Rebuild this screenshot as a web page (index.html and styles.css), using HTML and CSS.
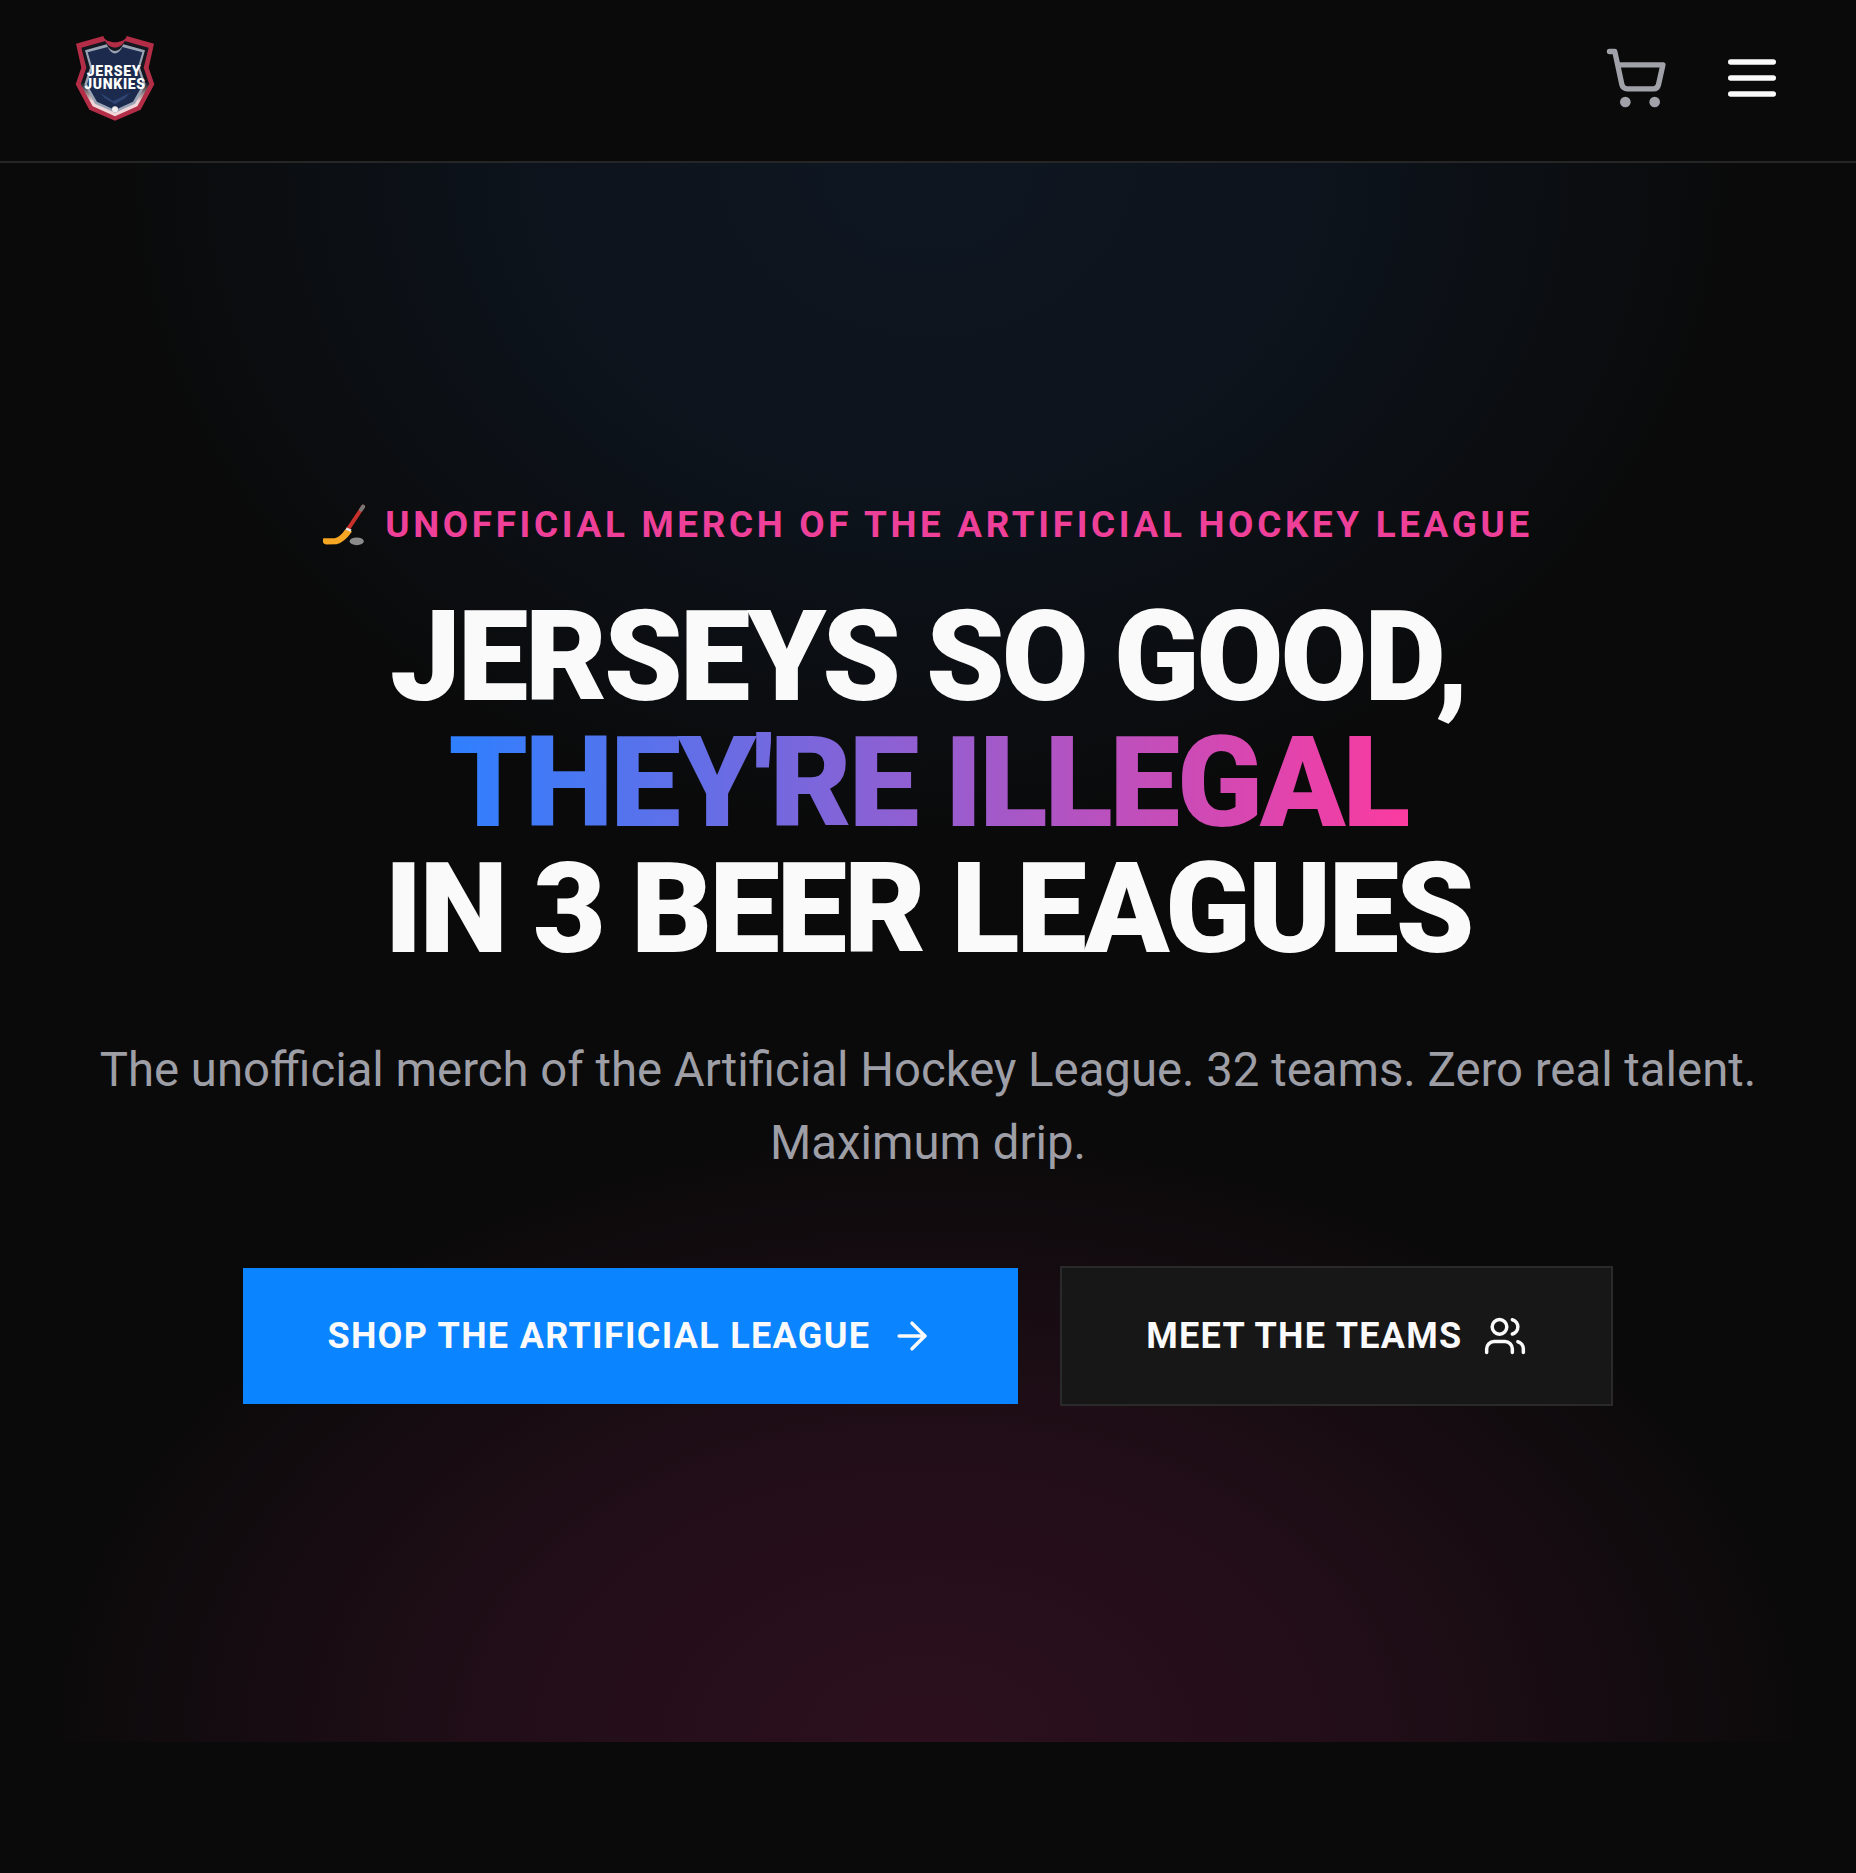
FILE: index.html
```html
<!DOCTYPE html>
<html lang="en">
<head>
  <meta charset="UTF-8" />
  <meta name="viewport" content="width=device-width, initial-scale=1" />
  <title>Jersey Junkies</title>
  <link rel="stylesheet" href="styles.css">
</head>
<body>
  <header class="topbar">
    <svg class="logo" viewBox="66 42 258 258" aria-label="Jersey Junkies">
      <defs>
        <linearGradient id="rim" x1="0" y1="0" x2="0" y2="1">
          <stop offset="0.55" stop-color="#14171f"/>
          <stop offset="0.8" stop-color="#f0d6d8"/>
        </linearGradient>
      </defs>
      <path d="M160 45 C165 70 225 70 230 45 L312 68 L296 140 L313 190 L272 266 L195 299 L118 266 L77 190 L94 140 L78 68 Z" fill="#b32d47"/>
      <path d="M166 60 C177 86 213 86 224 60 L296 80 L281 140 L298 190 L262 256 L195 286 L128 256 L92 190 L109 140 L94 80 Z" fill="url(#rim)"/>
      <path d="M170 70 C182 97 208 97 220 70 L285 88 L270 140 L287 190 L255 248 L195 275 L135 248 L103 190 L120 140 L105 88 Z" fill="#9aa3b4"/>
      <path d="M173 78 C185 104 205 104 217 78 L277 94 L263 140 L279 190 L249 242 L195 267 L141 242 L111 190 L127 140 L113 94 Z" fill="#1c2b4d"/>
      <path d="M150 215 L190 240 L240 215 L225 232 L195 250 L165 232 Z" fill="#2f4472"/>
      <circle cx="195" cy="265" r="9" fill="#f2eef0"/>
      <text class="logo-text" x="191" y="165" textLength="162" lengthAdjust="spacing">JERSEY</text>
      <text class="logo-text" x="194" y="203" textLength="182" lengthAdjust="spacing">JUNKIES</text>
    </svg>
    <div class="topbar-actions">
      <svg class="icon-lg icon-cart" viewBox="0 0 24 24"><circle cx="8" cy="21" r="1"/><circle cx="19" cy="21" r="1"/><path d="M2.05 2.05h2l2.66 12.42a2 2 0 0 0 2 1.58h9.78a2 2 0 0 0 1.95-1.57l1.65-7.43H5.12"/></svg>
      <svg class="icon-lg icon-menu" viewBox="0 0 24 24"><path d="M4 12h16"/><path d="M4 6h16"/><path d="M4 18h16"/></svg>
    </div>
  </header>

  <section class="hero">
    <p class="eyebrow">
      <svg class="stick" viewBox="47 42 124 124">
        <path d="M118 115 L160 52" stroke="#c9302c" stroke-width="11" stroke-linecap="round"/>
        <path d="M160 52 L154 61" stroke="#777" stroke-width="11" stroke-linecap="round"/>
        <path d="M110 116 L129 122 Q106 154 85 158 L56 159 Q42 157 48 141 L80 141 Q96 138 110 116 Z" fill="#f5a623"/>
        <path d="M112 114 L126 120" stroke="#e6e6e6" stroke-width="7"/>
        <ellipse cx="142" cy="150" rx="20" ry="11" fill="#8b8b8b"/>
      </svg>
      <span>Unofficial merch of the Artificial Hockey League</span>
    </p>
    <h1 class="headline">
      <span class="headline-line">Jerseys so good,</span>
      <span class="headline-line headline-grad">They're illegal</span>
      <span class="headline-line">in 3 beer leagues</span>
    </h1>
    <p class="lead">The unofficial merch of the Artificial Hockey League. 32 teams. Zero real talent. Maximum drip.</p>
    <div class="cta-row">
      <a class="btn btn-primary">Shop the Artificial League
        <svg class="icon-btn" viewBox="0 0 24 24"><path d="M5 12h14"/><path d="m12 5 7 7-7 7"/></svg>
      </a>
      <a class="btn btn-dark">Meet the Teams
        <svg class="icon-btn" viewBox="0 0 24 24"><path d="M16 21v-2a4 4 0 0 0-4-4H6a4 4 0 0 0-4 4v2"/><circle cx="9" cy="7" r="4"/><path d="M22 21v-2a4 4 0 0 0-3-3.87"/><path d="M16 3.13a4 4 0 0 1 0 7.75"/></svg>
      </a>
    </div>
  </section>

  <div class="page-end"></div>
</body>
</html>
```

FILE: styles.css
```css
* { box-sizing: border-box; }

body {
  margin: 0;
  background: #0a0a0a;
  color: #fafafa;
  font-family: Roboto, "Liberation Sans", sans-serif;
}

.topbar {
  display: flex;
  align-items: center;
  justify-content: space-between;
  height: 163px;
  padding: 0 72px 6px 72px;
  border-bottom: 2px solid #262626;
}

.logo {
  width: 86px;
  height: 86px;
}

.logo-text {
  fill: #fff;
  font-family: Roboto, sans-serif;
  font-weight: 900;
  font-size: 42px;
  text-anchor: middle;
}

.topbar-actions {
  display: flex;
  align-items: center;
  gap: 52px;
}

.icon-lg {
  width: 64px;
  height: 64px;
  fill: none;
  stroke-width: 2;
  stroke-linecap: round;
  stroke-linejoin: round;
}

.icon-cart { stroke: #a1a1aa; }
.icon-menu { stroke: #fafafa; }

.hero {
  display: flex;
  flex-direction: column;
  align-items: center;
  justify-content: center;
  height: 1579px;
  padding-top: 3px;
  text-align: center;
  background:
    radial-gradient(ellipse 820px 680px at 50% 0, rgba(30, 75, 135, 0.19), rgba(30, 75, 135, 0.14) 50%, transparent 100%),
    radial-gradient(ellipse 900px 620px at 50% 100%, rgba(200, 40, 120, 0.18), rgba(200, 40, 120, 0.12) 50%, transparent 100%);
}

.eyebrow {
  display: flex;
  align-items: center;
  gap: 18px;
  margin: 0 0 47px;
  color: #ee4099;
  font-size: 36.8px;
  font-weight: 700;
  letter-spacing: 0.1em;
  text-transform: uppercase;
}

.stick {
  width: 44px;
  height: 44px;
}

.headline {
  margin: 0 0 62px;
  font-size: 126px;
  font-weight: 900;
  line-height: 126px;
  letter-spacing: -0.025em;
  text-transform: uppercase;
}

.headline-line { display: block; }

.headline-grad {
  width: fit-content;
  margin: 0 auto;
  background: linear-gradient(90deg, #2e80ff, #fb3ba0);
  background-clip: text;
  -webkit-background-clip: text;
  color: transparent;
}

.lead {
  max-width: 1700px;
  margin: 0 0 86px;
  color: #9e9ea6;
  font-size: 47.3px;
  line-height: 73px;
}

.cta-row {
  display: flex;
  align-items: center;
  gap: 42px;
}

.btn {
  display: flex;
  align-items: center;
  gap: 20px;
  font-size: 36px;
  font-weight: 700;
  letter-spacing: 1.3px;
  text-transform: uppercase;
  white-space: nowrap;
}

.btn-primary {
  height: 136px;
  padding: 0 84px;
  background: #0a84ff;
  color: #fafafa;
}

.btn-dark {
  height: 140px;
  padding: 0 84px;
  background: #171717;
  border: 2px solid #2a2a2a;
  color: #fafafa;
}

.icon-btn {
  width: 44px;
  height: 44px;
  fill: none;
  stroke: currentColor;
  stroke-width: 1.9;
  stroke-linecap: round;
  stroke-linejoin: round;
}

.page-end { height: 131px; }
```
